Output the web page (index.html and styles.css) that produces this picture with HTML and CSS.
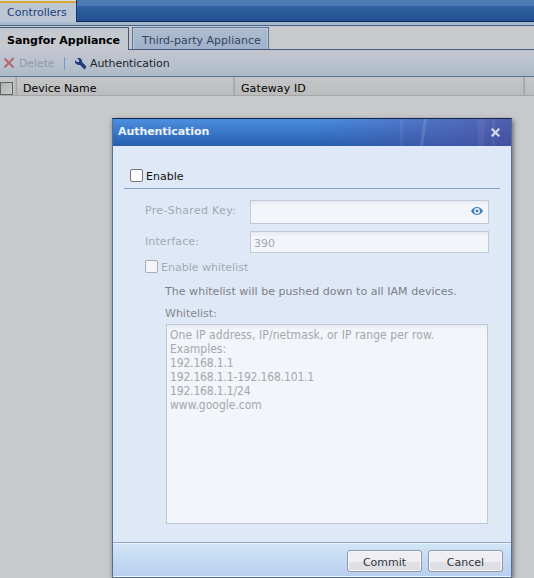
FILE: index.html
```
<!DOCTYPE html>
<html lang="en">
<head>
<meta charset="utf-8">
<title>Controllers</title>
<link rel="stylesheet" href="styles.css">
</head>
<body>
<div class="app">
  <header class="topbar"><div class="page-tab">Controllers</div></header>
  <div class="strip"></div>
  <nav class="tabs">
    <div class="tab active">Sangfor Appliance</div>
    <div class="tab">Third-party Appliance</div>
  </nav>
  <div class="toolbar">
    <svg class="delete-icon" width="12" height="12" viewBox="0 0 12 12"><path d="M1.5 1.5 10.5 10.5M10.5 1 1.5 10.5" fill="none" stroke="#b9656b" stroke-width="2"/></svg>
    <span class="delete">Delete</span>
    <span class="divider"></span>
    <svg class="wrench" width="11" height="11" viewBox="0 0 11 11"><path d="M2 0h3l2 2v2l4 4v2l-1 1H9L5 7H3L0 5V2l2 2h2V2z" fill="#213d80"/></svg>
    <span class="auth">Authentication</span>
  </div>
  <div class="grid-head">
    <div class="cell check"><i></i></div>
    <div class="cell name">Device Name</div>
    <div class="cell gateway">Gateway ID</div>
    <div class="cell"></div>
  </div>
</div>
<section class="dialog">
  <header class="title">
    <svg class="rays" width="178" height="27" viewBox="0 0 178 27"><path d="M67 0h3v27h-3z" fill="#fff" opacity=".06"/><path d="M91 0h3l-4 27h-3z" fill="#fff" opacity=".13"/><path d="M144 0h8l-1 27h-6zM159 0h3v27h-3z" fill="#fff" opacity=".06"/></svg>
    <h1>Authentication</h1>
    <svg class="close" width="9" height="9" viewBox="0 0 9 9"><path d="M.7.7 8.3 8.3M8.3.7.7 8.3" stroke="#d3daf0" stroke-width="2.2"/></svg>
  </header>
  <div class="body">
    <label class="enable"><i class="box"></i><span>Enable</span></label>
    <div class="row key"><span>Pre-Shared Key:</span>
      <div class="input"><svg width="12" height="8" viewBox="0 0 12 8"><path fill-rule="evenodd" d="M0 4C3-1.3 9-1.3 12 4 9 9.3 3 9.3 0 4zM6 1.1a2.9 2.9 0 1 0 0 5.8A2.9 2.9 0 0 0 6 1.1zM6 2.6a1.4 1.4 0 1 1 0 2.8 1.4 1.4 0 0 1 0-2.8z" fill="#3d7fb8"/></svg></div></div>
    <div class="row interface"><span>Interface:</span><div class="input">390</div></div>
    <label class="whitelist-check"><i class="box"></i><span>Enable whitelist</span></label>
    <p class="note">The whitelist will be pushed down to all IAM devices.</p>
    <p class="list-label">Whitelist:</p>
    <div class="area"><div class="hint">One IP address, IP/netmask, or IP range per row.</div><div>Examples:</div><div class="ip">192.168.1.1</div><div class="ip">192.168.1.1-192.168.101.1</div><div class="ip">192.168.1.1/24</div><div>www.google.com</div></div>
  </div>
  <footer><button>Commit</button><button>Cancel</button></footer>
</section>
</body>
</html>
```
FILE: styles.css
```
* { box-sizing: border-box; }
body { margin: 0; width: 534px; height: 578px; overflow: hidden; position: relative; background: #c8c9cb; color: #202226; font: 11px/14px "DejaVu Sans", Verdana, sans-serif; }
h1, p { margin: 0; }
svg { flex: none; display: block; }
span { white-space: nowrap; }
.topbar { height: 22px; background: linear-gradient(#4b79b1 0 6px, #3063a4 6px, #22508f 21px, #0d2856 21px); }
.page-tab { width: 77px; height: 22px; padding: 6px 0 0 7px; color: #243e7a; background: linear-gradient(#d9dde4 0 1px, #d6a534 1px 3px, #bdc7d4 3px, #b8c5d4); border-right: 1px solid #14366d; }
.strip { height: 4px; background: #a7b9cf; border-bottom: 1px solid #456389; }
.tabs { display: flex; align-items: flex-end; gap: 3px; height: 24px; border-bottom: 1px solid #44587b; }
.tab { height: 22px; padding: 6px 0 0 9px; width: 137px; border: 1px solid #5a7498; border-bottom: 0; color: #35435f; background: linear-gradient(#aebdd0, #9fb2ca); box-shadow: inset 1px 1px #bdcad8, inset -1px 0 #bdcad8; white-space: nowrap; }
.tab.active { width: 129px; height: 23px; margin-bottom: -1px; padding: 6px 0 0 7px; color: #000; font-weight: bold; letter-spacing: -.04px; background: #c4c8cf; border-left: 0; border-color: #44587b; box-shadow: none; }
.toolbar { height: 27px; display: flex; align-items: center; padding-left: 3px; background: linear-gradient(#c3c5ce, #b9c2cf 50%, #abbbc6); border-bottom: 1px solid #5c7593; }
.toolbar span:not(.divider) { padding-top: 2px; }
.delete { color: #929aa4; margin-left: 4px; width: 45px; letter-spacing: -.1px; }
.divider { width: 1px; height: 13px; background: #7199cc; margin-right: 10px; }
.auth { margin-left: 4px; letter-spacing: -.08px; }
.grid-head { display: flex; height: 19px; background: linear-gradient(#c4c5c6, #bbbcbd); border-bottom: 1px solid #a5a6a8; color: #000; }
.cell { height: 18px; border-right: 1px solid #a2a3a5; box-shadow: inset -1px 0 #b2b3b4; padding: 5px 0 0 6px; }
.cell:last-child { border: 0; box-shadow: none; }
.check { width: 17px; padding: 5px 0 0; }
.check i { display: block; width: 13px; height: 13px; border: 1px solid #626568; background: linear-gradient(135deg, #b0b1b1, #cacaca); }
.name { width: 218px; }
.gateway { width: 290px; letter-spacing: .1px; }
.dialog { position: absolute; left: 112px; top: 118px; width: 400px; height: 460px; border: 1px solid #536f98; border-top-color: #10264b; background: #dfe8f6; box-shadow: 1px 2px 5px rgba(0,0,0,.55); display: flex; flex-direction: column; }
.title { height: 27px; flex: none; position: relative; display: flex; align-items: center; justify-content: space-between; padding: 0 11px 1px 5px; background: linear-gradient(90deg, transparent 50%, rgba(85,83,165,.55) 85%, rgba(85,70,150,.65)), linear-gradient(#4c8edf, #255fae); color: #edf3fd; }
h1 { font-size: 11px; line-height: 14px; letter-spacing: -.06px; }
.rays { position: absolute; right: 0; top: 0; }
.close { position: relative; }
.body { height: 396px; padding: 23px 11px 0; flex: none; color: #a3a8b0; }
label { display: flex; align-items: center; }
.box { display: block; flex: none; width: 13px; height: 13px; border: 1px solid #747579; border-radius: 2px; background: #fff; }
.enable { height: 20px; padding: 0 0 6px 6px; border-bottom: 1px solid #88a4c5; color: #111; gap: 3px; align-items: flex-start; }
.enable span { padding-top: 1px; }
.row { display: flex; margin-left: 21px; }
.row span { width: 105px; padding-top: 4px; }
.key span { letter-spacing: .31px; }
.input { width: 239px; height: 24px; border: 1px solid #bfc8d7; background: linear-gradient(#e7ebef, #f2f5fa 5px); display: flex; align-items: center; justify-content: flex-end; padding: 0 5px 2px; }
.key { margin-top: 11px; }
.interface { margin-top: 7px; }
.interface span { padding-top: 4px; letter-spacing: .1px; }
.interface .input { height: 22px; justify-content: flex-start; padding: 3px 3px 0; }
.whitelist-check { margin: 7px 0 0 21px; height: 13px; gap: 3px; }
.whitelist-check span { padding-top: 2px; }
.whitelist-check .box { border-color: #a9adb3; background: #f3f5f9; }
.note { margin: 12px 0 0 41px; color: #7b7f85; white-space: nowrap; letter-spacing: .04px; }
.list-label { margin: 8px 0 0 41px; color: #858990; }
.area { margin: 3px 0 0 42px; width: 322px; height: 200px; border: 1px solid #bfc8d7; background: linear-gradient(#e8ecf0, #f2f5fa 5px); padding: 3px 3px; font: 12px/14px "DejaVu Sans Condensed", "DejaVu Sans", sans-serif; color: #a4a7ab; white-space: nowrap; }
.hint { letter-spacing: .08px; }
.ip { letter-spacing: -.16px; }
footer { height: 35px; flex: none; border-top: 1px solid #8da5ca; box-shadow: inset 0 1px #eef5fc, inset 0 -1px #eef5fc; background: linear-gradient(#d2e6f6, #b7ceef); display: flex; justify-content: flex-end; gap: 6px; padding: 7px 8px 0; }
button { width: 75px; height: 22px; padding: 3px 0 0; border: 1px solid #9396ab; border-radius: 3px; background: linear-gradient(#eeeef3 0 57%, #dedfe4 57%); box-shadow: inset 0 0 0 1px #fafafc; font: 11px/14px "DejaVu Sans", sans-serif; color: #30343a; }
```
